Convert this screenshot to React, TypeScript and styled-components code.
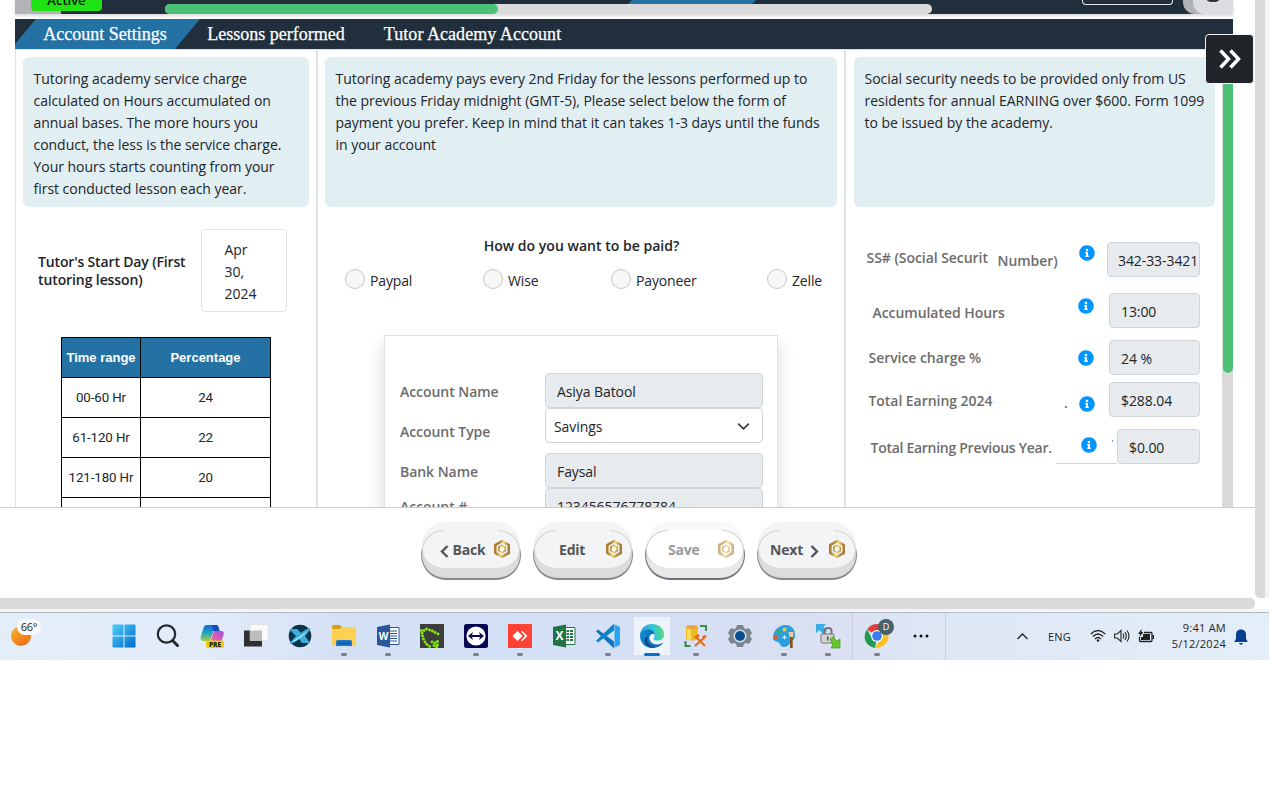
import React from "react";
import styled, { createGlobalStyle, css } from "styled-components";
import { FaInfoCircle } from "react-icons/fa";

const Global = createGlobalStyle`
  * { box-sizing: border-box; }
  body { margin: 0; background: #fff; color: #212529; font-family: "Open Sans", "Noto Sans", sans-serif; font-size: 14px; overflow: hidden; }
`;

const Page = styled.div`width: 1269px; height: 800px; overflow: hidden;`;
const Browser = styled.div`display: flex; height: 598px; overflow: hidden; position: relative;`;
const Main = styled.div`width: 1255px; display: flex; flex-direction: column;`;
const OuterScroll = styled.div`
  width: 14px; height: 598px; background: #dadada; border-right: 4px solid #f5f5f5;
  border-bottom-left-radius: 5px;
`;

const Header = styled.header`
  height: 14px; margin: 0 22px 0 15px; background: #212f3d; display: flex; align-items: flex-start;
  box-shadow: 0 2px 3px rgba(0,0,0,.15);
`;
const StatusArea = styled.div`
  width: 150px; height: 14px;
  background: linear-gradient(#b1b3b9, #b1b3b9) 0 0 / 46px 14px no-repeat;
`;
const Status = styled.div`
  width: 71px; height: 11px; margin-left: 16px; border-radius: 0 0 4px 4px; background: #1fe312;
  color: #111; font-weight: 600; font-size: 13px; text-align: center; line-height: 0; overflow: hidden;
  span { display: block; line-height: 18px; margin-top: -9px; }
`;
const TopTrack = styled.div`width: 767px; height: 14px; display: flex; flex-direction: column;`;
const TopTab = styled.div`
  width: 128px; height: 4px; margin-left: 463px; background: #2471a3;
  clip-path: polygon(4px 0, 100% 0, calc(100% - 4px) 100%, 0 100%);
`;
const Track = styled.div`height: 10px; border-radius: 5px; background: #dadada;`;
const TrackThumb = styled.div`width: 333px; height: 10px; border-radius: 5px; background: #4bc177;`;
const OutlineButton = styled.div`width: 91px; height: 5px; margin-left: 150px; border: 1px solid #e6e8ea; border-top: 0; border-radius: 0 0 4px 4px;`;
const Corner = styled.div`
  width: 50px; height: 14px; margin-left: 10px; background: #b1b3b9; border-bottom-left-radius: 12px;
  padding-left: 10px; overflow: hidden;
`;
const CornerInner = styled.div`
  height: 14px; background: #dcdde0; border-bottom-left-radius: 12px; padding-left: 14px;
  &::before { content: ""; display: block; width: 12px; height: 2px; background: #333; border-radius: 0 0 6px 6px / 0 0 2px 2px; }
`;

const Tabs = styled.nav`
  height: 30px; margin: 5px 22px 0 15px; background: #212f3d; display: flex;
  font-family: "Liberation Serif", serif; font-size: 18px; line-height: 30px; color: #fff;
  -webkit-text-stroke: 0.25px #fff;
`;
const Tab = styled.div<{ $active?: boolean; $w: number; $ls?: number }>`
  width: ${p => p.$w}px; text-align: center; white-space: nowrap; letter-spacing: ${p => p.$ls ?? 0}px;
  ${p => p.$active && css`background: #2471a3; clip-path: polygon(21px 0, 100% 0, calc(100% - 25px) 100%, 0 100%, 0 25px); padding-right: 5px;`}
`;

const Content = styled.div`
  height: 458px; margin-left: 15px; width: 1218px; border-top: 1px solid #dee2e6; border-left: 1px solid #dee2e6;
  display: flex; overflow: hidden;
`;
const Column = styled.section<{ $w: number; $line?: boolean }>`
  width: ${p => p.$w}px; flex: none; padding: 7px 7px 0 ${p => (p.$line ? 7 : 8)}px;
  ${p => p.$line && css`border-right: 2px solid #dee2e6;`}
`;
const Notice = styled.div`
  height: 150px; border-radius: 6px; background: #e1eef2; padding: 11px 0 0 10.5px;
  font-size: 14px; line-height: 22.1px;
`;
const Line = styled.div<{ $ls?: number }>`white-space: nowrap; letter-spacing: ${p => p.$ls ?? -0.03}px;`;
const InnerScroll = styled.div`
  width: 11px; background: #dadada;
  &::before { content: ""; display: block; margin-left: 1px; height: 323px; background: #4bc177; border-radius: 0 0 5px 5px; }
`;

const StartDay = styled.div`display: flex; align-items: center; margin: 22px 0 0 15px; height: 83px;`;
const StartLabel = styled.div`width: 163px; font-weight: 600; line-height: 18px; white-space: nowrap;`;
const DateBox = styled.div`
  width: 86px; height: 83px; border: 1px solid #dee2e6; border-radius: 4px; padding: 9px 0 0 22.5px; line-height: 22px;
`;
const Table = styled.table`
  border-collapse: collapse; margin: 25px 0 0 38px; width: 210px; table-layout: fixed;
  font-family: Roboto, sans-serif; font-size: 13.3px; text-align: center; letter-spacing: -0.1px;
  th, td { border: 1px solid #000; height: 40px; padding: 0 0 1px; white-space: nowrap; }
  th { background: #2471a3; color: #fff; font-family: "Liberation Sans", sans-serif; font-size: 13px; letter-spacing: 0; padding: 0; }
  th:first-child { width: 79px; }
`;

const Question = styled.h3`margin: 28px 0 0; padding-left: 1px; text-align: center; font-size: 14px; font-weight: 600; line-height: 22px; letter-spacing: 0.02px;`;
const Options = styled.div`
  display: grid; grid-template-columns: 138px 128px 156px 60px; margin: 12px 0 0 20px; height: 22px;
`;
const Option = styled.label`display: flex; gap: 5px; white-space: nowrap; line-height: 23px; letter-spacing: -0.15px;`;
const Radio = styled.span`width: 20px; height: 20px; flex: none; border: 1px solid #c8c8c8; border-radius: 50%; background: #f7f7f7;`;
const Card = styled.div`
  width: 394px; height: 260px; margin: 44px 0 0 59px; border: 1px solid #dee2e6; box-shadow: 0 8px 16px rgba(0,0,0,.15);
  padding: 37px 14px 0 15px; display: grid; grid-template-columns: 145px 218px; grid-auto-rows: 35px 45px;
`;
const Label = styled.div<{ $top?: number; $ls?: number }>`
  color: #6c6c6c; font-weight: 600; line-height: 20px; padding-top: ${p => p.$top ?? 9}px; white-space: nowrap; letter-spacing: ${p => p.$ls ?? -0.05}px;
`;
const Field = styled.div<{ $w?: number; $plain?: boolean; $pad?: number }>`
  height: 35px; width: ${p => p.$w ?? 218}px; border: 1px solid #ced4da; border-radius: 4px;
  background: ${p => (p.$plain ? "#fff" : "#e7ebee")}; padding: 1px 0 0 ${p => p.$pad ?? 11}px;
  display: flex; align-items: center; white-space: nowrap; letter-spacing: -0.08px; flex: none;
  svg { margin-left: auto; margin-right: 12px; }
`;

const InfoRow = styled.div<{ $mt: number }>`display: flex; height: 35px; margin-top: ${p => p.$mt}px; width: 346px;`;
const InfoLabel = styled(Label)<{ $left: number; $w: number }>`
  padding-left: ${p => p.$left}px; width: ${p => p.$w}px; flex: none; overflow: visible;
`;
const InfoMark = styled.span<{ $top: number; $gap: number }>`
  height: 16px; margin-top: ${p => p.$top}px; margin-right: ${p => p.$gap}px; color: #0095ff; display: flex; flex: none;
`;
const Rule = styled.div`width: 61px; height: 35px; flex: none; border-bottom: 1px solid #cfd3d7; padding-left: 25px; display: flex;`;

const MenuButton = styled.button`
  position: absolute; left: 1205px; top: 34px; width: 49px; height: 50px; border: 1px solid #f2f2f2; border-radius: 4px;
  background: #212529; padding: 0; display: flex; align-items: center; justify-content: center;
`;

const Footer = styled.footer`
  height: 91px; border-top: 1px solid #ccc; display: flex; gap: 12px; padding: 14px 0 0 421px; background: #fff;
`;
const Pill = styled.button<{ $disabled?: boolean }>`
  position: relative; width: 100px; height: 56px; border: 0; padding: 0 0 1px; background: none;
  font: 700 14px "Open Sans", sans-serif; display: flex; align-items: center; color: ${p => (p.$disabled ? "#999" : "#555")};
  &::before {
    content: ""; position: absolute; left: 0; right: 0; top: 8px; height: 48px; border-radius: 25px;
    border: solid ${p => (p.$disabled ? "#6d7379" : "#888")}; border-width: 0 1.5px 2px;
    background: ${p => (p.$disabled ? "#e8e8e8" : "#dcdcdc")};
  }
`;
const Lid = styled.span<{ $disabled?: boolean }>`
  position: absolute; left: 1px; right: 1px; top: 0; height: 46px; border-radius: 25px;
  background: ${p => (p.$disabled ? "#f8f8f8" : "#f3f4f6")};
`;
const Face = styled.span<{ $disabled?: boolean }>`
  position: absolute; left: 1px; right: 1px; top: 8px; height: 38px; border-radius: 24px / 22px 22px 19px 19px; border: 1px solid transparent; border-bottom: 0;
  background:
    linear-gradient(${p => (p.$disabled ? "#fff, #fff" : "#f3f4f6, #f3f4f6")}) padding-box,
    linear-gradient(to right, #cfcfcf 22px, ${p => (p.$disabled ? "#fff" : "#f3f4f6")} 22px, ${p => (p.$disabled ? "#fff" : "#f3f4f6")} 76px, #cfcfcf 76px) border-box;
`;
const PillText = styled.span<{ $l: number; $gap?: number }>`
  position: relative; margin-left: ${p => p.$l}px; display: flex; align-items: center; gap: ${p => p.$gap ?? 0}px; letter-spacing: -0.2px;
  svg { flex: none; margin-top: 3px; }
`;
const Gem = styled.span<{ $dim?: boolean; $r?: number }>`
  position: absolute; right: ${p => p.$r ?? 10}px; top: 17px; width: 18px; height: 20px; opacity: ${p => (p.$dim ? 0.6 : 1)};
  svg { display: block; }
`;

const BottomScroll = styled.div`
  height: 14px; border-bottom: 3px solid #f5f5f5; display: flex; background: #fff;
  &::before { content: ""; width: 1255px; height: 11px; background: #dadada; border-radius: 0 5px 5px 0; }
`;

const Taskbar = styled.div`
  height: 48px; border-top: 1px solid #b3bac6; display: flex; align-items: stretch;
  background: linear-gradient(90deg, #e4eef8 0, #e2ecf8 200px, #d5e0f5 350px, #d3e1f6 500px, #d6dff4 700px, #dbe1f1 850px, #dfe8f5 960px, #e3eef8 1269px);
`;
const Weather = styled.div`width: 102px; flex: none; padding: 6px 0 0 11px; display: flex;`;
const Sun = styled.div`width: 20px; height: 20px; margin-top: 7px; border-radius: 50%; background: linear-gradient(145deg, #f7b82d, #ee6510);`;
const Temp = styled.div`width: 24px; height: 16px; margin-left: -14px; border-radius: 8px; background: #f7f9fb; font-size: 11px; line-height: 16px; text-align: center; letter-spacing: -0.2px;`;
const TaskItem = styled.div<{ $run?: boolean; $active?: boolean }>`
  width: 44px; flex: none; display: flex; flex-direction: column; align-items: center; padding-top: 11px;
  svg { display: block; width: 24px; height: 24px; flex: none; overflow: visible; }
  ${p => p.$active && css`background: linear-gradient(#eff3fb,#eff3fb) center 4px / 36px 38px no-repeat;`}
  &::after {
    content: ""; margin-top: 5px; height: 3px; border-radius: 2px; flex: none;
    width: ${p => (p.$active ? 16 : 6)}px; background: ${p => (p.$active ? "#0a70cf" : p.$run ? "#7b808a" : "transparent")};
  }
`;
const TaskDivider = styled.div<{ $ml: number; $mr?: number }>`width: 1px; flex: none; background: #c8cedd; margin-left: ${p => p.$ml}px; margin-right: ${p => p.$mr ?? 0}px;`;
const Tray = styled.div`margin-left: auto; display: flex; align-items: center; padding-right: 21px; font-size: 11px;`;
const Lang = styled.div`margin: 0 0 0 20px; width: 42px; letter-spacing: 0.2px;`;
const Clock = styled.div`width: 72px; text-align: right; line-height: 16px; margin-right: 8px; white-space: nowrap; padding-bottom: 1px; letter-spacing: 0.25px;`;
const TrayIcon = styled.span<{ $r?: number }>`display: flex; margin-right: ${p => p.$r ?? 0}px; margin-bottom: 1px;`;

const GemIcon = ({ id }: { id: string }) => (
  <svg width="18" height="20" viewBox="0 0 18 20" fill="none">
    <defs><linearGradient id={id} gradientUnits="userSpaceOnUse" x1="1" x2="17" y1="8" y2="12"><stop offset="0" stopColor="#a9772f" /><stop offset=".28" stopColor="#b58a3e" /><stop offset=".5" stopColor="#eee07c" /><stop offset=".75" stopColor="#b98d43" /><stop offset="1" stopColor="#a9772f" /></linearGradient></defs>
    <path d="M9 2.200 15.700 6v8L9 17.800 2.300 14V6Z" stroke={`url(#${id})`} strokeWidth="2.600" />
    <path d="M9 6.300 12.200 8.200v3.600L9 13.700l-3.200-1.900V8.200Z" stroke={`url(#${id})`} strokeWidth="1.600" />
  </svg>
);
const Chevron = ({ right }: { right?: boolean }) => (
  <svg width="9" height="13" viewBox="0 0 9 13" fill="none" stroke="currentColor" strokeWidth="2.400">
    <path d={right ? "M1.500 1 7 6.500 1.500 12" : "M7.500 1 2 6.500 7.500 12"} />
  </svg>
);

const WindowsIcon = () => (
  <svg viewBox="0 0 24 24">
    <defs><linearGradient id="win" gradientUnits="userSpaceOnUse" x1="0" y1="0" x2="24" y2="24"><stop stopColor="#4fd0fb" /><stop offset="1" stopColor="#0068ca" /></linearGradient></defs>
    <path fill="url(#win)" d="M.5.500h11v11H.5zM12.500.500h11v11h-11zM.5 12.500h11v11H.5zM12.500 12.500h11v11h-11z" />
  </svg>
);
const SearchIcon = () => (<svg viewBox="0 0 24 24" fill="none" stroke="#24282c"><circle cx="10.500" cy="10" r="8.700" strokeWidth="2.200" /><path d="m17 17 4.500 4.500" strokeWidth="3" strokeLinecap="round" /></svg>);
const CopilotIcon = () => (
  <svg viewBox="0 0 24 24">
    <defs>
      <linearGradient id="cpa" x1="0" x2="0" y1="0" y2="1"><stop stopColor="#1763dd" /><stop offset=".5" stopColor="#20a5bd" /><stop offset="1" stopColor="#a8ce3d" /></linearGradient>
      <linearGradient id="cpb" x1="1" x2="0" y1="0" y2="1"><stop stopColor="#a54be8" /><stop offset="1" stopColor="#f9708e" /></linearGradient>
    </defs>
    <path fill="url(#cpa)" d="M7 1h9c2 0 2.500 2 3 4l.5 2h-6L10 17H4c-3 0-4-2-3-5L3.500 4C4.200 2 5 1 7 1Z" />
    <path fill="#1749b8" d="M11 1h5c2 0 2.500 2 3 4l.5 2h-6c-.5-3-1-5-2.500-6Z" />
    <path fill="url(#cpb)" d="M14 7h7c2.500 0 3.200 1.500 2.500 4l-2 6c-.5 1.500-1.500 2-3 2H10Z" />
    <rect x="6" y="16.500" width="18" height="7.500" rx="2" fill="#fdc60a" />
    <text x="15" y="22.800" fontSize="6.500" fontWeight="800" fill="#222" textAnchor="middle" fontFamily="Open Sans">PRE</text>
  </svg>
);
const TaskViewIcon = () => (<svg viewBox="0 0 24 24"><rect x="0" y="6.500" width="18" height="16" fill="#303033" /><rect x="6" y=".5" width="18" height="16" fill="#fafafa" stroke="#d3d7dc" strokeWidth=".5" /><path fill="#bdbdbf" d="M6 6.500h12v10H6z" /></svg>);
const XIcon = () => (<svg viewBox="0 0 24 24"><circle cx="12" cy="12" r="11.300" fill="#09344a" /><path fill="#3eaede" d="M1 5h8l4 4q4-4 10-5l-6 8 5 7h-8l-3-4q-4 4-10 5l7-8Z" /><path fill="#8ddcf8" d="m3 18 18-12-6 6-7 5Z" /></svg>);
const FolderIcon = () => (<svg viewBox="0 0 24 24"><path fill="#dc9a15" d="M0 3q0-2 2-2h6l3 3h11v8H0Z" /><path fill="#ffd052" d="M0 5h7l3-2h12q2 0 2 2v15q0 2-2 2H2q-2 0-2-2Z" /><path fill="#1877c9" d="M4 22v-4q0-2 2-2h12q2 0 2 2v4Z" /><path fill="#0d579d" d="M6 18.500h12V20H6z" /></svg>);
const OfficeIcon = ({ letter, color }: { letter: string; color: string }) => (
  <svg viewBox="0 0 24 24"><path fill="#fff" stroke={color} d="M12 3.500h11v17H12z" />
    {letter === "W" ? <path stroke={color} strokeWidth="1.200" d="M14 7h7M14 9.500h7M14 12h7M14 14.500h7M14 17h7" /> : <path stroke={color} strokeWidth="2" d="M14.500 7H17M18 7h3M14.500 10H17M18 10h3M14.500 13H17M18 13h3M14.500 16H17M18 16h3" />}
    <path fill={color} d="m1 3 13-2.500v23L1 21Z" />
    <text x="7.500" y="16" fill="#fff" fontFamily="Open Sans" fontWeight="700" fontSize={letter === "W" ? 10 : 12} textAnchor="middle">{letter}</text></svg>
);
const dots: [number, number][] = [[18,10],[15,8.500],[12.300,7],[9.500,6],[6.500,5],[4,6.500],[2,9],[1,6.500],[2.500,12],[3.500,15],[5,18],[7,20.500],[9.500,22.500],[12,18],[15,19],[17.500,17.500],[14,21.500],[17.500,21],[16.500,23]];
const GridIcon = () => (<svg viewBox="0 0 24 24"><path fill="#3d3d3c" d="M0 0h24v24H0z" />{dots.map(([x, y], i) => <circle key={i} cx={x} cy={y} r="1.450" fill="#83ee0b" />)}</svg>);
const ViewerIcon = () => (<svg viewBox="0 0 24 24"><rect width="24" height="24" rx="2.500" fill="#050553" /><circle cx="12" cy="12" r="9.600" fill="#fff" /><path fill="#050553" d="m4 12 5-4-1 3h8l-1-3 5 4-5 4 1-3H8l1 3Z" /></svg>);
const DeskIcon = () => (<svg viewBox="0 0 24 24"><path fill="#ff4136" d="M0 0h24v24H0z" /><path fill="#fff" d="m9.500 7 5 5-5 5-5-5Zm3.500.5L14.500 7l5 5-5 5-1.500-.5 4-4.500Z" /></svg>);
const CodeIcon = () => (<svg viewBox="0 0 24 24"><path fill="#0e75b8" d="m0 7.200 2-1.800L18 17.500V23l-.5 1Z" /><path fill="#1185ca" d="m0 16.800 2 1.800L18 6.500V1l-.5-1Z" /><path fill="#2ba5ee" d="m17.500 0 6.500 3v18l-6.500 3q1 0 1-2V2q0-2-1-2Z" /></svg>);
const EdgeIcon = () => (
  <svg viewBox="0 0 24 24">
    <defs><linearGradient id="eda" x1="0" x2="1" y1=".3" y2=".2"><stop stopColor="#279fe1" /><stop offset=".55" stopColor="#31c6d8" /><stop offset="1" stopColor="#5bdb69" /></linearGradient><linearGradient id="edb" x1="0" x2="1"><stop stopColor="#138bd3" /><stop offset="1" stopColor="#0c58a8" /></linearGradient></defs>
    <path fill="url(#eda)" d="M0 12C0 4 6 0 12 0c8 0 12 5.500 12 10.500 0 4-3 6-6.500 6-2 0-4-.6-4-1.600 0-.9 1-1.400 1-3.400C14.500 8.500 12 6.500 8 6.500 4 6.500 1 9 0 12Z" />
    <path fill="url(#edb)" d="M0 12c0-3.500 3.500-6.500 8-6.500 4 0 6.500 2.500 6.500 5-2-1.500-6 .5-5 4.500.8 3.500 4 5.500 7.500 5.500 2 0 3.500-.5 5-1.500.5-.3 1 .1.500.8C20.500 22.500 16.500 24 12 24 5.500 24 0 19 0 12Z" />
    <path fill="#104a8b" d="M8 12.500c-2 5 1.500 10 7 11-6.500 1.500-11-3-10.500-7.500.2-1.500 1.500-3 3.500-3.500Z" />
  </svg>
);
const SqlIcon = () => (<svg viewBox="0 0 24 24"><path fill="#f0ba22" d="M2 3h12v12q-6 3-12 0Z" /><path fill="#ffdc5b" d="M3 5h4v11l-4-1Z" /><ellipse cx="8" cy="3" rx="6" ry="2" fill="#e9a83a" /><path fill="none" stroke="#368d49" strokeWidth="2" d="M16 2h6v5M1.500 17v5h5" /><path stroke="#e46a17" strokeWidth="2" d="m11 22 10-9m-8 1 8 8" /><path fill="#e46a17" d="m10 13 4-3 2 2-4 3Zm8 0 2-2 3 1-3 3Z" /></svg>);
const GearIcon = () => (<svg viewBox="0 0 24 24"><path fill="#7b858d" d="M9 1h6l1 3 2 1 3-1 3 5-2 3 2 3-3 5-3-1-2 1-1 3H9l-1-3-2-1-3 1-3-5 2-3-2-3 3-5 3 1 2-1Z" /><circle cx="12" cy="12" r="6.500" fill="#d8e0e7" /><circle cx="12" cy="12" r="5" fill="#084e91" /></svg>);
const PaintIcon = () => (<svg viewBox="0 0 24 24"><path fill="#2b9fe0" d="M13 1c6-.5 10 4 10 9.500 0 5-2 6-4 7.500s-2 5-7 5c-3.500 0-3.500-3-5.500-4.500-2-1.600-5.500-1-5.500-4.500C1 7 6 1.300 13 1Z" /><path fill="#d9edfa" d="m12.500 10.500.8 2 2 .8-2 .8-.8 2-.8-2-2-.8 2-.8Z" /><circle cx="4" cy="13" r="2.300" fill="#e25b2c" /><circle cx="6.500" cy="8" r="2.200" fill="#32b15b" /><circle cx="12.500" cy="5.500" r="2" fill="#f4c51b" /><path fill="#efcb96" d="M16.500 8h5l-.5 5h-3.500Z" /><path fill="#91531f" d="M18 13h2.700v11H18Z" /></svg>);
const LockIcon = () => (<svg viewBox="0 0 24 24"><path fill="#39afe5" d="M0 0h10L7.500 3 11 7 7 10 3.500 6 0 9Z" /><path fill="none" stroke="#777" strokeWidth="2" d="M8.500 11V7q0-3 3.500-3t3.500 3v4" /><rect x="5" y="10" width="13" height="9" rx="1" fill="#d0d2d4" stroke="#747779" /><path fill="#555" d="M11 12.500h1.500v4H11z" /><path fill="#69c82e" stroke="#42961b" strokeWidth=".7" d="m14 15 3-2 4 4 3-2v9H15l2-3Z" /></svg>);
const ChromeIcon = () => (<svg viewBox="0 0 24 24"><path fill="#df4037" d="M12 12 2 5.500C7-2 18-1.500 22.400 6H12Z" /><path fill="#219951" d="M12 12 10 24C0 22-3 13 2 5.500l5 8.500Z" /><path fill="#fbc116" d="M12 12V6h10.400C26 14 21 24 10 24l5-8Z" /><circle cx="12" cy="12" r="6" fill="#fff" /><circle cx="12" cy="12" r="4.800" fill="#397cf2" /><circle cx="21" cy="3" r="8" fill="#47616d" /><text x="21" y="6" fill="#fff" fontSize="9" textAnchor="middle" fontFamily="Open Sans">D</text></svg>);
const MoreIcon = () => (<svg viewBox="0 0 24 24" fill="#111"><circle cx="6" cy="12" r="1.500" /><circle cx="12" cy="12" r="1.500" /><circle cx="18" cy="12" r="1.500" /></svg>);

const apps: { icon: React.ReactNode; run?: boolean; active?: boolean }[] = [
  { icon: <WindowsIcon /> }, { icon: <SearchIcon /> }, { icon: <CopilotIcon /> }, { icon: <TaskViewIcon /> }, { icon: <XIcon /> },
  { icon: <FolderIcon />, run: true }, { icon: <OfficeIcon letter="W" color="#2b579a" />, run: true }, { icon: <GridIcon /> },
  { icon: <ViewerIcon />, run: true }, { icon: <DeskIcon />, run: true }, { icon: <OfficeIcon letter="X" color="#217346" /> },
  { icon: <CodeIcon />, run: true }, { icon: <EdgeIcon />, active: true }, { icon: <SqlIcon />, run: true }, { icon: <GearIcon /> },
  { icon: <PaintIcon />, run: true }, { icon: <LockIcon />, run: true },
];
const noticeOne = ["Tutoring academy service charge", "calculated on Hours accumulated on", "annual bases. The more hours you", "conduct, the less is the service charge.", "Your hours starts counting from your", "first conducted lesson each year."];
const noticeTwo = ["Tutoring academy pays every 2nd Friday for the lessons performed up to", "the previous Friday midnight (GMT-5), Please select below the form of", "payment you prefer. Keep in mind that it can takes 1-3 days until the funds", "in your account"];
const noticeThree = ["Social security needs to be provided only from US", "residents for annual EARNING over $600. Form 1099", "to be issued by the academy."];
const ranges = [["00-60 Hr", "24"], ["61-120 Hr", "22"], ["121-180 Hr", "20"], ["", ""]];

const Info = ({ top, gap }: { top: number; gap: number }) => <InfoMark $top={top} $gap={gap}><FaInfoCircle size={16} /></InfoMark>;

export default function App() {
  return (
    <Page>
      <Global />
      <Browser>
        <Main>
          <Header>
            <StatusArea><Status><span>Active</span></Status></StatusArea>
            <TopTrack><TopTab /><Track><TrackThumb /></Track></TopTrack>
            <OutlineButton />
            <Corner><CornerInner /></Corner>
          </Header>
          <Tabs>
            <Tab $active $w={185}>Account Settings</Tab>
            <Tab $w={152}>Lessons performed</Tab>
            <Tab $w={241} $ls={0.05}>Tutor Academy Account</Tab>
          </Tabs>
          <Content>
            <Column $w={302} $line>
              <Notice>{noticeOne.map(t => <Line key={t}>{t}</Line>)}</Notice>
              <StartDay>
                <StartLabel><Line $ls={-0.15}>Tutor's Start Day (First</Line><Line $ls={-0.1}>tutoring lesson)</Line></StartLabel>
                <DateBox><Line>Apr</Line><Line>30,</Line><Line>2024</Line></DateBox>
              </StartDay>
              <Table>
                <thead><tr><th>Time range</th><th>Percentage</th></tr></thead>
                <tbody>{ranges.map(([r, p]) => <tr key={r}><td>{r}</td><td>{p}</td></tr>)}</tbody>
              </Table>
            </Column>
            <Column $w={528} $line>
              <Notice>{noticeTwo.map(t => <Line key={t}>{t}</Line>)}</Notice>
              <Question>How do you want to be paid?</Question>
              <Options>{["Paypal", "Wise", "Payoneer", "Zelle"].map(t => <Option key={t}><Radio />{t}</Option>)}</Options>
              <Card>
                <Label>Account Name</Label><Field>Asiya Batool</Field>
                <Label $top={14}>Account Type</Label>
                <Field $plain $pad={8}>Savings
                  <svg width="13" height="13" viewBox="0 0 16 16" fill="none" stroke="#343a40" strokeWidth="2" strokeLinecap="round" strokeLinejoin="round"><path d="m2 5 6 6 6-6" /></svg>
                </Field>
                <Label>Bank Name</Label><Field>Faysal</Field>
                <Label>Account #</Label><Field>123456576778784</Field>
              </Card>
            </Column>
            <Column $w={376}>
              <Notice><Line>{noticeThree[0]}</Line><Line>{noticeThree[1]}</Line><Line>{noticeThree[2]}</Line></Notice>
              <InfoRow $mt={35}>
                <InfoLabel $left={12.5} $w={143.5} $top={6}>SS# (Social Securit</InfoLabel>
                <InfoLabel $left={0} $w={81.5} $top={9}>Number)</InfoLabel>
                <Info top={3} gap={12} /><Field $w={93} $pad={10}>342-33-3421</Field>
              </InfoRow>
              <InfoRow $mt={16}>
                <InfoLabel $left={18.500} $w={224} $top={10}>Accumulated Hours</InfoLabel>
                <Info top={5} gap={15} /><Field $w={91}>13:00</Field>
              </InfoRow>
              <InfoRow $mt={12}>
                <InfoLabel $left={14.500} $w={224} $top={8}>Service charge %</InfoLabel>
                <Info top={10} gap={15} /><Field $w={91}>24 %</Field>
              </InfoRow>
              <InfoRow $mt={7}>
                <InfoLabel $left={14.500} $w={210} $top={9}>Total Earning 2024</InfoLabel>
                <InfoLabel $left={0} $w={15} $top={11}>.</InfoLabel>
                <Info top={14} gap={14} /><Field $w={91}>$288.04</Field>
              </InfoRow>
              <InfoRow $mt={12}>
                <InfoLabel $left={16.500} $w={202} $top={9} $ls={-0.28}>Total Earning Previous Year.</InfoLabel>
                <Rule><Info top={8} gap={15} />
                  <svg width="2" height="14" viewBox="0 0 2 14"><path fill="#57a7e5" d="M0 11h1v2H0z" /></svg>
                </Rule><Field $w={83}>$0.00</Field>
              </InfoRow>
            </Column>
            <InnerScroll />
          </Content>
          <Footer>
            <Pill><Lid /><Face /><PillText $l={19} $gap={3.5}><Chevron />Back</PillText><Gem><GemIcon id="g1" /></Gem></Pill>
            <Pill><Lid /><Face /><PillText $l={26}>Edit</PillText><Gem><GemIcon id="g2" /></Gem></Pill>
            <Pill $disabled><Lid $disabled /><Face $disabled /><PillText $l={23}>Save</PillText><Gem $dim><GemIcon id="g3" /></Gem></Pill>
            <Pill><Lid /><Face /><PillText $l={13} $gap={7}>Next<Chevron right /></PillText><Gem $r={11}><GemIcon id="g4" /></Gem></Pill>
          </Footer>
        </Main>
        <OuterScroll />
        <MenuButton>
          <svg width="22" height="20" viewBox="0 0 22 20" fill="none" stroke="#fff" strokeWidth="3.500"><path d="m1.500 1.500 8 8.500-8 8.500M11.500 1.500l8 8.500-8 8.500" /></svg>
        </MenuButton>
      </Browser>
      <BottomScroll />
      <Taskbar>
        <Weather><Sun /><Temp>66°</Temp></Weather>
        {apps.map((a, i) => <TaskItem key={i} $run={a.run} $active={a.active}>{a.icon}</TaskItem>)}
        <TaskDivider $ml={2} $mr={2} />
        <TaskItem $run><ChromeIcon /></TaskItem>
        <TaskItem><MoreIcon /></TaskItem>
        <TaskDivider $ml={2} />
        <Tray>
          <svg width="11" height="7" viewBox="0 0 11 7" fill="none" stroke="#222" strokeWidth="1.400"><path d="m.5 6 5-5 5 5" /></svg>
          <Lang>ENG</Lang>
          <TrayIcon $r={8}><svg width="16" height="14" viewBox="0 0 16 14" fill="none" stroke="#222" strokeWidth="1.200"><path d="M.7 5q7.300-7 14.600 0M2.800 7.500q5.200-5 10.400 0M5 10q3-3 6 0" /><circle cx="8" cy="11.500" r="1.200" fill="#222" stroke="none" /></svg></TrayIcon>
          <TrayIcon $r={8}><svg width="16" height="14" viewBox="0 0 16 14" fill="none" stroke="#222" strokeWidth="1.100"><path d="M.6 5h2.700L7 1.500v11L3.300 9H.6ZM9 4.500q1.500 2.500 0 5M11 3q2.600 4 0 8M13 1.500q4 5.500 0 11" /></svg></TrayIcon>
          <TrayIcon><svg width="16" height="14" viewBox="0 0 16 14"><path fill="#222" d="M5 5h7v6H3V8h2Z" /><path fill="none" stroke="#222" strokeWidth="1.300" d="M6 3.500h7q1 0 1 1v7q0 1-1 1H2.500q-1 0-1-1V8" /><path fill="#222" d="M14.500 6H16v4h-1.500zM3.500 0 0 5h2L1.500 8 5.500 3h-2Z" /></svg></TrayIcon>
          <Clock><div>9:41 AM</div><div>5/12/2024</div></Clock>
          <svg width="14" height="16" viewBox="0 0 14 16" fill="#064091"><path d="M7 .5c3.500 0 5 2.500 5 5v4l1.500 3v.5H.5v-.5L2 9.500v-4c0-2.500 1.500-5 5-5ZM5 14h4q-.5 1.700-2 1.700T5 14Z" /></svg>
        </Tray>
      </Taskbar>
    </Page>
  );
}
